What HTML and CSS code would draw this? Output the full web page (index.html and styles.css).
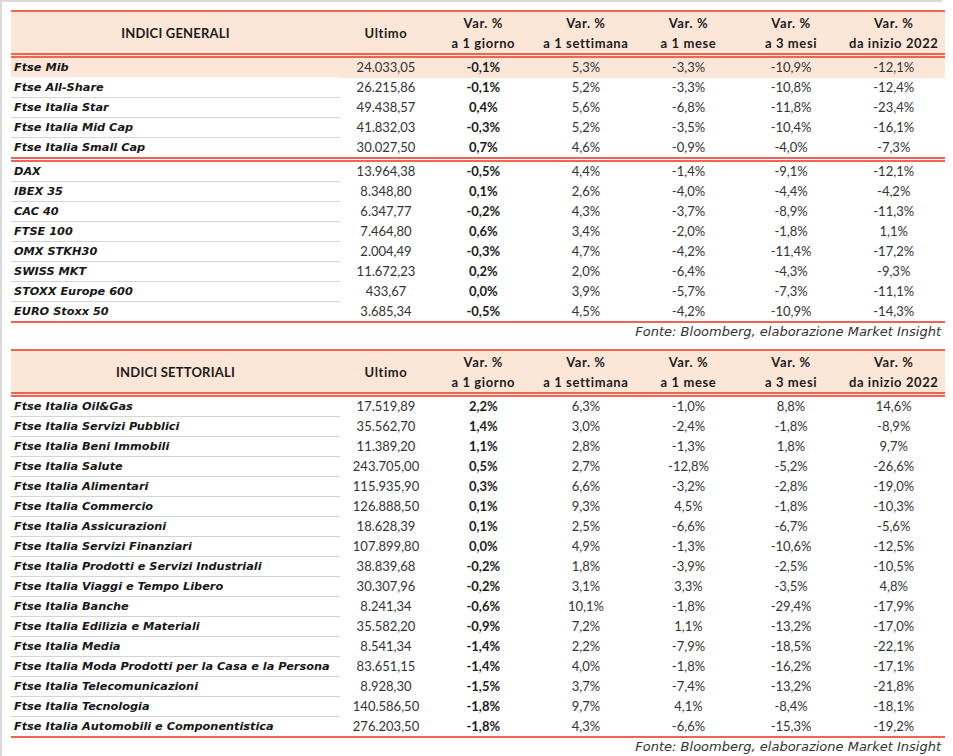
FILE: index.html
```html
<!DOCTYPE html>
<html lang="it">
<head>
<meta charset="utf-8">
<title>Indici</title>
<link rel="stylesheet" href="styles.css">
</head>
<body>
<div class="frame">
  <table class="idx">
    <colgroup><col class="c-name"><col class="c-last"><col class="c-var"><col class="c-var"><col class="c-var"><col class="c-var"><col class="c-var"></colgroup>
    <thead>
      <tr><th class="h-name">INDICI GENERALI</th><th>Ultimo</th><th>Var. %<br>a 1 giorno</th><th>Var. %<br>a 1 settimana</th><th>Var. %<br>a 1 mese</th><th>Var. %<br>a 3 mesi</th><th>Var. %<br>da inizio 2022</th></tr>
    </thead>
    <tbody>
      <tr class="hl"><td class="name">Ftse Mib</td><td>24.033,05</td><td class="day">-0,1%</td><td>5,3%</td><td>-3,3%</td><td>-10,9%</td><td>-12,1%</td></tr>
      <tr><td class="name">Ftse All-Share</td><td>26.215,86</td><td class="day">-0,1%</td><td>5,2%</td><td>-3,3%</td><td>-10,8%</td><td>-12,4%</td></tr>
      <tr><td class="name">Ftse Italia Star</td><td>49.438,57</td><td class="day">0,4%</td><td>5,6%</td><td>-6,8%</td><td>-11,8%</td><td>-23,4%</td></tr>
      <tr><td class="name">Ftse Italia Mid Cap</td><td>41.832,03</td><td class="day">-0,3%</td><td>5,2%</td><td>-3,5%</td><td>-10,4%</td><td>-16,1%</td></tr>
      <tr><td class="name">Ftse Italia Small Cap</td><td>30.027,50</td><td class="day">0,7%</td><td>4,6%</td><td>-0,9%</td><td>-4,0%</td><td>-7,3%</td></tr>
    </tbody>
    <tbody class="grp">
      <tr><td class="name">DAX</td><td>13.964,38</td><td class="day">-0,5%</td><td>4,4%</td><td>-1,4%</td><td>-9,1%</td><td>-12,1%</td></tr>
      <tr><td class="name">IBEX 35</td><td>8.348,80</td><td class="day">0,1%</td><td>2,6%</td><td>-4,0%</td><td>-4,4%</td><td>-4,2%</td></tr>
      <tr><td class="name">CAC 40</td><td>6.347,77</td><td class="day">-0,2%</td><td>4,3%</td><td>-3,7%</td><td>-8,9%</td><td>-11,3%</td></tr>
      <tr><td class="name">FTSE 100</td><td>7.464,80</td><td class="day">0,6%</td><td>3,4%</td><td>-2,0%</td><td>-1,8%</td><td>1,1%</td></tr>
      <tr><td class="name">OMX STKH30</td><td>2.004,49</td><td class="day">-0,3%</td><td>4,7%</td><td>-4,2%</td><td>-11,4%</td><td>-17,2%</td></tr>
      <tr><td class="name">SWISS MKT</td><td>11.672,23</td><td class="day">0,2%</td><td>2,0%</td><td>-6,4%</td><td>-4,3%</td><td>-9,3%</td></tr>
      <tr><td class="name">STOXX Europe 600</td><td>433,67</td><td class="day">0,0%</td><td>3,9%</td><td>-5,7%</td><td>-7,3%</td><td>-11,1%</td></tr>
      <tr><td class="name">EURO Stoxx 50</td><td>3.685,34</td><td class="day">-0,5%</td><td>4,5%</td><td>-4,2%</td><td>-10,9%</td><td>-14,3%</td></tr>
    </tbody>
  </table>
  <p class="source">Fonte: Bloomberg, elaborazione Market Insight</p>

  <table class="idx">
    <colgroup><col class="c-name"><col class="c-last"><col class="c-var"><col class="c-var"><col class="c-var"><col class="c-var"><col class="c-var"></colgroup>
    <thead>
      <tr><th class="h-name">INDICI SETTORIALI</th><th>Ultimo</th><th>Var. %<br>a 1 giorno</th><th>Var. %<br>a 1 settimana</th><th>Var. %<br>a 1 mese</th><th>Var. %<br>a 3 mesi</th><th>Var. %<br>da inizio 2022</th></tr>
    </thead>
    <tbody>
      <tr><td class="name">Ftse Italia Oil&amp;Gas</td><td>17.519,89</td><td class="day">2,2%</td><td>6,3%</td><td>-1,0%</td><td>8,8%</td><td>14,6%</td></tr>
      <tr><td class="name">Ftse Italia Servizi Pubblici</td><td>35.562,70</td><td class="day">1,4%</td><td>3,0%</td><td>-2,4%</td><td>-1,8%</td><td>-8,9%</td></tr>
      <tr><td class="name">Ftse Italia Beni Immobili</td><td>11.389,20</td><td class="day">1,1%</td><td>2,8%</td><td>-1,3%</td><td>1,8%</td><td>9,7%</td></tr>
      <tr><td class="name">Ftse Italia Salute</td><td>243.705,00</td><td class="day">0,5%</td><td>2,7%</td><td>-12,8%</td><td>-5,2%</td><td>-26,6%</td></tr>
      <tr><td class="name">Ftse Italia Alimentari</td><td>115.935,90</td><td class="day">0,3%</td><td>6,6%</td><td>-3,2%</td><td>-2,8%</td><td>-19,0%</td></tr>
      <tr><td class="name">Ftse Italia Commercio</td><td>126.888,50</td><td class="day">0,1%</td><td>9,3%</td><td>4,5%</td><td>-1,8%</td><td>-10,3%</td></tr>
      <tr><td class="name">Ftse Italia Assicurazioni</td><td>18.628,39</td><td class="day">0,1%</td><td>2,5%</td><td>-6,6%</td><td>-6,7%</td><td>-5,6%</td></tr>
      <tr><td class="name">Ftse Italia Servizi Finanziari</td><td>107.899,80</td><td class="day">0,0%</td><td>4,9%</td><td>-1,3%</td><td>-10,6%</td><td>-12,5%</td></tr>
      <tr><td class="name">Ftse Italia Prodotti e Servizi Industriali</td><td>38.839,68</td><td class="day">-0,2%</td><td>1,8%</td><td>-3,9%</td><td>-2,5%</td><td>-10,5%</td></tr>
      <tr><td class="name">Ftse Italia Viaggi e Tempo Libero</td><td>30.307,96</td><td class="day">-0,2%</td><td>3,1%</td><td>3,3%</td><td>-3,5%</td><td>4,8%</td></tr>
      <tr><td class="name">Ftse Italia Banche</td><td>8.241,34</td><td class="day">-0,6%</td><td>10,1%</td><td>-1,8%</td><td>-29,4%</td><td>-17,9%</td></tr>
      <tr><td class="name">Ftse Italia Edilizia e Materiali</td><td>35.582,20</td><td class="day">-0,9%</td><td>7,2%</td><td>1,1%</td><td>-13,2%</td><td>-17,0%</td></tr>
      <tr><td class="name">Ftse Italia Media</td><td>8.541,34</td><td class="day">-1,4%</td><td>2,2%</td><td>-7,9%</td><td>-18,5%</td><td>-22,1%</td></tr>
      <tr><td class="name">Ftse Italia Moda Prodotti per la Casa e la Persona</td><td>83.651,15</td><td class="day">-1,4%</td><td>4,0%</td><td>-1,8%</td><td>-16,2%</td><td>-17,1%</td></tr>
      <tr><td class="name">Ftse Italia Telecomunicazioni</td><td>8.928,30</td><td class="day">-1,5%</td><td>3,7%</td><td>-7,4%</td><td>-13,2%</td><td>-21,8%</td></tr>
      <tr><td class="name">Ftse Italia Tecnologia</td><td>140.586,50</td><td class="day">-1,8%</td><td>9,7%</td><td>4,1%</td><td>-8,4%</td><td>-18,1%</td></tr>
      <tr><td class="name">Ftse Italia Automobili e Componentistica</td><td>276.203,50</td><td class="day">-1,8%</td><td>4,3%</td><td>-6,6%</td><td>-15,3%</td><td>-19,2%</td></tr>
    </tbody>
  </table>
  <p class="source">Fonte: Bloomberg, elaborazione Market Insight</p>
</div>
</body>
</html>
```

FILE: styles.css
```css
html, body {
  margin: 0;
  padding: 0;
  background: #ffffff;
}

.frame {
  border-top: 2px solid #d9d9d9;
  border-left: 2px solid #d9d9d9;
  padding: 8px 0 0 9px;
  width: 942px;
  height: 756px;
  box-sizing: border-box;
  font-family: "Lato", "DejaVu Sans", sans-serif;
  font-size: 13px;
  color: #2b2b2b;
}

.idx {
  width: 934px;
  border-collapse: collapse;
  table-layout: fixed;
  border-bottom: 2px solid #ef6650;
}

.c-name { width: 329px; }
.c-last { width: 92px; }
.c-var { width: 102.6px; }

.idx thead tr {
  background: #fce6d8;
  border-top: 2px solid #ef6650;
  border-bottom: 5px double #ef6650;
}

.idx th {
  height: 39px;
  padding: 1px 0 0;
  font-weight: 700;
  line-height: 20px;
  letter-spacing: 0.6px;
  text-align: center;
  vertical-align: middle;
  color: #1c1c1c;
}

.idx th.h-name {
  letter-spacing: 0.2px;
}

.idx tbody.grp {
  border-top: 5px double #ef6650;
}

.idx td {
  height: 19px;
  padding: 0;
  line-height: 19px;
  text-align: center;
  white-space: nowrap;
  color: #333333;
}

.idx td.name {
  height: 18px;
  line-height: 18px;
  padding: 1px 0 0 3px;
  text-align: left;
  font-family: "DejaVu Sans", "Lato", sans-serif;
  font-size: 11.3px;
  font-weight: 700;
  font-style: italic;
  color: #161616;
  border-bottom: 1px solid #d4d4d4;
}

.idx tbody tr:last-child td.name {
  border-bottom: none;
}

.idx tr.hl {
  background: #fce6d8;
}

.idx tr.hl td.name {
  border-bottom-color: #ffffff;
}

.idx td.day {
  font-weight: 700;
  color: #1c1c1c;
}

.source {
  margin: 0;
  width: 934px;
  height: 26px;
  line-height: 18px;
  box-sizing: border-box;
  padding-right: 4px;
  text-align: right;
  font-family: "DejaVu Sans", "Lato", sans-serif;
  font-size: 13px;
  font-style: italic;
  color: #333333;
}
```
